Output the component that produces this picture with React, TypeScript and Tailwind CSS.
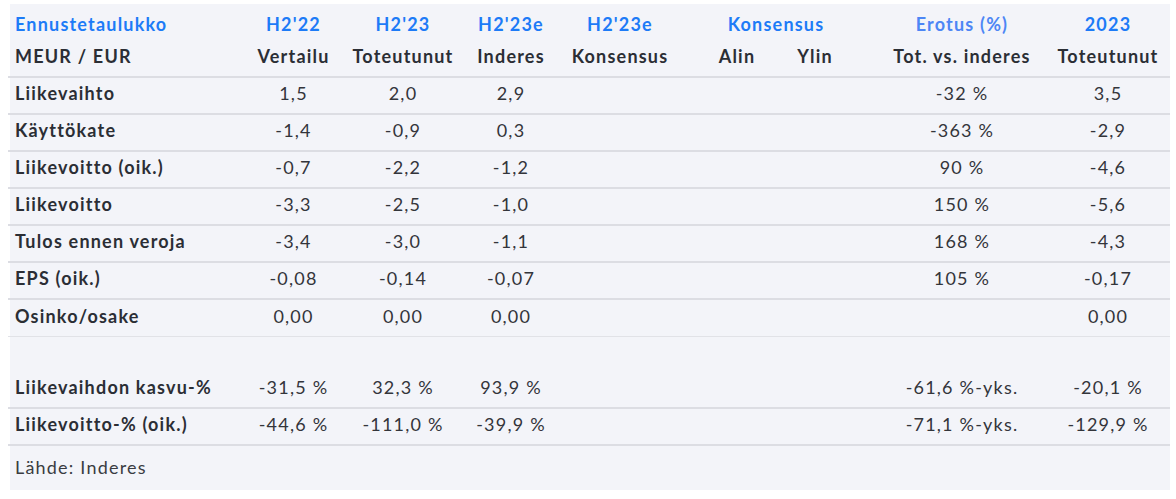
import React from "react";

const COLS = "grid grid-cols-[238px_91px_128px_88px_143px_78px_78px_192px_124px]";

type Row = { label: string; v: string[] };

const dataRows: Row[] = [
  { label: "Liikevaihto", v: ["1,5", "2,0", "2,9", "", "", "", "-32 %", "3,5"] },
  { label: "Käyttökate", v: ["-1,4", "-0,9", "0,3", "", "", "", "-363 %", "-2,9"] },
  { label: "Liikevoitto (oik.)", v: ["-0,7", "-2,2", "-1,2", "", "", "", "90 %", "-4,6"] },
  { label: "Liikevoitto", v: ["-3,3", "-2,5", "-1,0", "", "", "", "150 %", "-5,6"] },
  { label: "Tulos ennen veroja", v: ["-3,4", "-3,0", "-1,1", "", "", "", "168 %", "-4,3"] },
  { label: "EPS (oik.)", v: ["-0,08", "-0,14", "-0,07", "", "", "", "105 %", "-0,17"] },
];

const cellPad = ["", "", "", "pr-[13px]", "", "", "pl-[24px]", ""];

function Cells({ v }: { v: string[] }) {
  return (
    <>
      {v.map((t, i) => (
        <div key={i} className={`flex items-center justify-center whitespace-nowrap pb-[4px] ${cellPad[i]}`}>
          {t}
        </div>
      ))}
    </>
  );
}

function DataRow({ label, v, border = "border-b-2 border-[#dcdde3]", h = "h-[37px]" }: Row & { border?: string; h?: string }) {
  return (
    <div className={`${COLS} ${h} ${border} -ml-[2px] pl-[2px]`}>
      <div className="flex items-center pl-[5px] pb-[4px] font-bold text-[#2b2e35] whitespace-nowrap">{label}</div>
      <Cells v={v} />
    </div>
  );
}

export default function App() {
  return (
    <div className="w-[1176px] h-[499px] bg-white pt-[4px] pl-[10px]">
      <div
        className="w-[1160px] h-[486px] bg-[#f3f4f9] text-[18px] text-[#33353b] tracking-[1.2px]"
        style={{ fontFamily: "Lato, 'Noto Sans', sans-serif" }}
      >
        {/* header row 1 */}
        <div className={`${COLS} h-[36px] font-bold text-[#1d7bf7]`}>
          <div className="flex items-center pl-[5px] pt-[5px]">Ennustetaulukko</div>
          <div className="flex items-center justify-center pt-[5px]">H2'22</div>
          <div className="flex items-center justify-center pt-[5px]">H2'23</div>
          <div className="flex items-center justify-center pt-[5px]">H2'23e</div>
          <div className="flex items-center justify-center pt-[5px] pr-[13px]">H2'23e</div>
          <div className="col-span-2 flex items-center justify-center pt-[5px]">Konsensus</div>
          <div className="flex items-center justify-center pt-[5px] pl-[24px] text-[#4d86f5]">Erotus (%)</div>
          <div className="flex items-center justify-center pt-[5px]">2023</div>
        </div>
        {/* header row 2 */}
        <div className={`${COLS} h-[38px] border-b-2 border-[#dcdde3] -ml-[2px] pl-[2px] font-bold text-[#2b2e35]`}>
          <div className="flex items-center pl-[5px] pb-[3px]">MEUR / EUR</div>
          <div className="flex items-center justify-center pb-[3px]">Vertailu</div>
          <div className="flex items-center justify-center pb-[3px]">Toteutunut</div>
          <div className="flex items-center justify-center pb-[3px]">Inderes</div>
          <div className="flex items-center justify-center pb-[3px] pr-[13px]">Konsensus</div>
          <div className="flex items-center justify-center pb-[3px]">Alin</div>
          <div className="flex items-center justify-center pb-[3px]">Ylin</div>
          <div className="flex items-center justify-center pb-[3px] pl-[24px] whitespace-nowrap">Tot. vs. inderes</div>
          <div className="flex items-center justify-center pb-[3px]">Toteutunut</div>
        </div>
        {dataRows.map((r) => (
          <DataRow key={r.label} {...r} />
        ))}
        <DataRow
          label="Osinko/osake"
          v={["0,00", "0,00", "0,00", "", "", "", "", "0,00"]}
          border="border-b border-[#e1e2e7]"
          h="h-[37px]"
        />
        <div className="h-[35px]" />
        <DataRow label="Liikevaihdon kasvu-%" v={["-31,5 %", "32,3 %", "93,9 %", "", "", "", "-61,6 %-yks.", "-20,1 %"]} />
        <DataRow label="Liikevoitto-% (oik.)" v={["-44,6 %", "-111,0 %", "-39,9 %", "", "", "", "-71,1 %-yks.", "-129,9 %"]} />
        <div className="h-[44px] flex items-center pl-[5px] pb-[2px] text-[#3a3c42]">Lähde: Inderes</div>
      </div>
    </div>
  );
}
